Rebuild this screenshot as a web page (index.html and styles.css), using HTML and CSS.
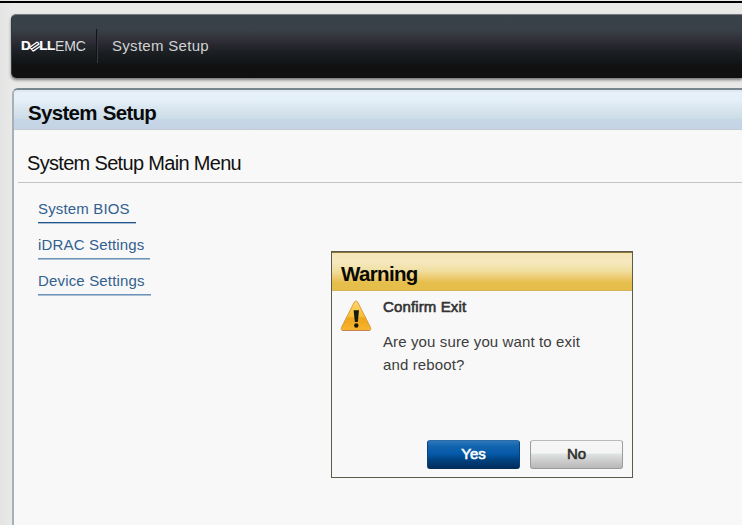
FILE: index.html
```html
<!DOCTYPE html>
<html lang="en">
<head>
<meta charset="utf-8">
<title>System Setup</title>
<link rel="stylesheet" href="styles.css">
</head>
<body>
<header class="topbar">
  <div class="brand">
    <span class="dell">D</span><svg class="tilted-e" viewBox="0 0 12 11"><g fill="none" stroke="#fff" stroke-width="1.3"><path d="M.9 6.3 8.2 1M2.4 8.2 10.2 2.9M4.2 10.1 11.2 5.3M.9 6.3 4.2 10.1M8.2 1 10.2 2.9"/></g></svg><span class="dell ll">LL</span><span class="emc">EMC</span>
  </div>
  <span class="divider"></span>
  <span class="product">System Setup</span>
</header>
<main class="panel">
  <h1 class="panel-title">System Setup</h1>
  <h2 class="menu-title">System Setup Main Menu</h2>
  <nav class="menu">
    <a class="link bios">System BIOS</a>
    <a class="link">iDRAC Settings</a>
    <a class="link">Device Settings</a>
  </nav>
</main>
<section class="dialog" role="dialog">
  <h2 class="dialog-title">Warning</h2>
  <div class="dialog-body">
    <svg class="warning-icon" viewBox="0 0 32 32">
      <defs>
        <linearGradient id="amber" x1="0" y1="0" x2="0" y2="1">
          <stop offset="0" stop-color="#ffd66b"/><stop offset=".55" stop-color="#f6bd37"/><stop offset=".57" stop-color="#eda51d"/><stop offset="1" stop-color="#f8b52d"/>
        </linearGradient>
      </defs>
      <path d="M17.6 2 30.6 27.6Q31.6 30.4 29 30.4H3Q.4 30.4 1.4 27.6L14.4 2Q16 -.2 17.6 2Z" fill="url(#amber)" stroke="#dc9a42" stroke-width="1"/>
      <path d="M2.5 30.5H29.5" stroke="#c98252"/>
      <path d="M13.6 10.3H19L17.8 22H14.9Z" fill="#15180f"/>
      <circle cx="16.3" cy="25.5" r="2.2" fill="#15180f"/>
    </svg>
    <div class="message">
      <h3 class="subject">Confirm Exit</h3>
      <p class="question">Are you sure you want to exit<br>and reboot?</p>
    </div>
  </div>
  <div class="actions">
    <button class="button primary">Yes</button>
    <button class="button">No</button>
  </div>
</section>
</body>
</html>
```
FILE: styles.css
```css
* { box-sizing: border-box; }
body {
  margin: 0;
  width: 742px;
  height: 525px;
  overflow: hidden;
  padding: 14px 0 0 11px;
  background:
    linear-gradient(#000, #000) 0 1px / 100% 2px no-repeat,
    linear-gradient(90deg, #e4e4e4, #e9e9e8 12px);
  font-family: "Liberation Sans", Arial, sans-serif;
}
h1, h2, h3, p { margin: 0; white-space: nowrap; }
.topbar {
  display: flex;
  align-items: center;
  height: 64px;
  padding: 0 0 1px 9px;
  border-top: 1px solid #747a7e;
  border-left: 1px solid #33383c;
  border-radius: 5px 0 0 5px;
  background: linear-gradient(#3a4249, #394148 23%, #302f38 40%, #1c2024 58%, #111515 76%, #111 83%, #101010);
  box-shadow: 0 2px 3px #777;
}
.brand { display: flex; align-items: center; width: 66px; height: 20px; color: #fff; line-height: 20px; }
.dell { font-size: 13.5px; font-weight: bold; -webkit-text-stroke: .2px #fff; }
.ll { letter-spacing: -.4px; }
.tilted-e { width: 12px; height: 11px; margin: 0 -2px 0 -1.5px; flex: none; }
.emc { font-size: 14px; color: #d7dadb; letter-spacing: -.1px; }
.divider { width: 2px; height: 34px; margin: 0 14px 0 9px; background: linear-gradient(90deg, #11151a 50%, #343a40 50%); }
.product { font-size: 15px; letter-spacing: .3px; color: #d0d2d3; line-height: 17px; margin-top: -1px; }
.panel {
  height: 450px;
  margin: 10px 0 0 1px;
  border: 2px solid #a5b0b9;
  border-top-color: #788690;
  border-right: 0;
  border-radius: 6px 0 0 0;
  background: #f8f8f8;
}
.panel-title {
  height: 40px;
  padding-left: 14px;
  border-bottom: 1px solid #c5cbd2;
  border-radius: 4px 0 0 0;
  background: linear-gradient(#dce5ed, #e7f0f8 3px, #e4f0f8 28%, #d8e4ee 50%, #ccdde7 73%, #c7d6e7 76%, #c5d4e5);
  color: #080a0c;
  font-size: 20.5px;
  line-height: 45px;
  letter-spacing: -.7px;
  word-spacing: 1px;
}
.menu-title {
  height: 53px;
  margin-left: 4px;
  padding-left: 9px;
  border-bottom: 1px solid #c3c3c3;
  color: #111;
  font-size: 20px;
  font-weight: normal;
  line-height: 66px;
  letter-spacing: -.68px;
}
.menu { display: flex; flex-direction: column; align-items: flex-start; gap: 12px; padding: 16px 0 0 24px; }
.link {
  height: 24px;
  padding-right: 6px;
  border-bottom: 1px solid #6c93b9;
  box-shadow: 0 1px #aabfd3;
  color: #33608f;
  font-size: 15px;
  line-height: 20px;
  letter-spacing: .16px;
}
.bios { border-bottom-color: #1f5488; }
.dialog {
  position: absolute;
  left: 331px;
  top: 251px;
  width: 302px;
  height: 227px;
  display: flex;
  flex-direction: column;
  border: 1px solid #5e5a4c;
  background: #f8f8f8;
}
.dialog-title {
  height: 39px;
  padding-left: 9px;
  border-top: 1px solid #8d7438;
  border-bottom: 1px solid #d6b45c;
  background: linear-gradient(#f4e6b8, #f6e8c0 25%, #f0df9f 48%, #edcc75 65%, #e5be4c 80%, #e5bd49);
  color: #0b0904;
  font-size: 20.5px;
  line-height: 41px;
  letter-spacing: -.65px;
}
.dialog-body { display: flex; flex: 1; padding: 9px 0 0 8px; }
.warning-icon { width: 32px; height: 32px; }
.message { margin-left: 11px; }
.subject {
  height: 14px;
  color: #333;
  font-size: 15px;
  font-weight: normal;
  line-height: 14px;
  letter-spacing: .13px;
  -webkit-text-stroke: .6px #333;
}
.question { margin-top: 16px; color: #3d3d3d; font-size: 15px; line-height: 23px; letter-spacing: .12px; }
.actions { display: flex; justify-content: flex-end; gap: 10px; padding: 0 9px 8px 0; }
.button {
  width: 93px;
  height: 29px;
  padding: 0 0 2px;
  border: 1px solid #9b9b9b;
  border-top-color: #bbb;
  border-radius: 3px;
  background: linear-gradient(#f6f6f6, #f3f4f3 44%, #dde2e0 50%, #cfcfcf 70%, #b8b8b8);
  color: #303030;
  font: 15px "Liberation Sans", Arial, sans-serif;
  -webkit-text-stroke: .6px currentColor;
}
.primary {
  border-color: #2b6ca9 #0b4177 #022b56;
  background: linear-gradient(#2c77bb, #1264ae 20%, #0559a8 48%, #014381 68%, #002d5d);
  color: #fff;
}
```
